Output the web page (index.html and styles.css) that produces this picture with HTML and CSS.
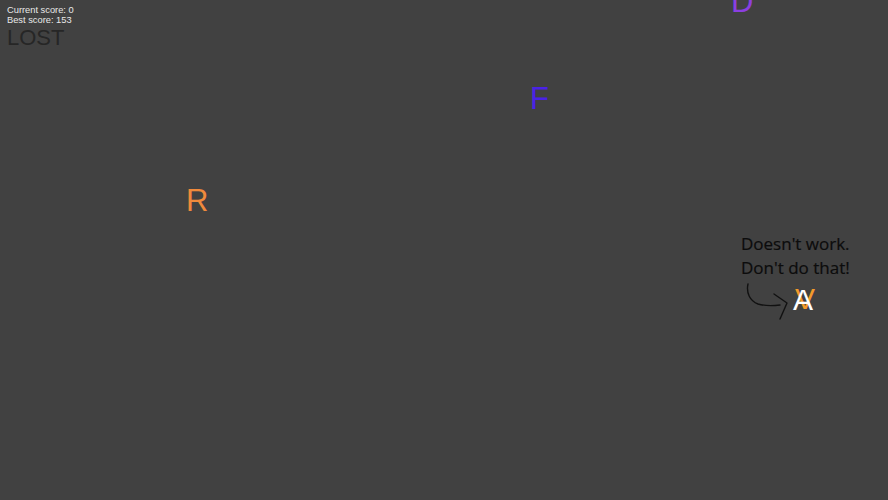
FILE: index.html
```html
<!DOCTYPE html>
<html>
<head>
<meta charset="utf-8">
<link rel="stylesheet" href="styles.css">
</head>
<body>
<div class="game">
  <div class="hud">
    <div class="score">Current score: 0</div>
    <div class="score">Best score: 153</div>
    <div class="status">LOST</div>
  </div>
  <span class="letter l-d">D</span>
  <span class="letter l-f">F</span>
  <span class="letter l-r">R</span>
  <span class="letter l-v">V</span>
  <span class="letter l-a">A</span>
  <div class="note">Doesn't work.<br>Don't do that!</div>
  <svg class="arrow" width="50" height="45" viewBox="0 0 50 45">
    <path d="M8 5 C6 14 10 22 18 25 C25 27 32 27 40 26" fill="none" stroke="#111" stroke-width="1.4" stroke-linecap="round"/>
    <path d="M34 15 L47 24 L40 40" fill="none" stroke="#111" stroke-width="1.4" stroke-linecap="round" stroke-linejoin="round"/>
  </svg>
</div>
</body>
</html>
```
FILE: styles.css
```css
html, body {
  margin: 0;
  padding: 0;
  background: #414141;
  overflow: hidden;
}
.game {
  position: relative;
  width: 888px;
  height: 500px;
  background: #414141;
  font-family: "Liberation Sans", Arial, sans-serif;
}
.hud {
  padding: 5px 0 0 7px;
  display: flex;
  flex-direction: column;
}
.score {
  font-size: 9.3px;
  line-height: 10px;
  color: #e8e8e8;
}
.status {
  font-size: 22px;
  line-height: 22px;
  color: #262626;
  margin-top: 2px;
}
.letter {
  position: absolute;
  font-size: 31px;
  line-height: 1;
}
.l-d { left: 731px; top: -14px; color: #8b3fe0; }
.l-f { left: 530px; top: 83px; color: #4a22e6; }
.l-r { left: 186px; top: 185px; color: #f08a3c; }
.l-v { left: 795px; top: 284px; color: #f39a2a; font-size: 30px; }
.l-a { left: 793px; top: 285px; color: #ffffff; font-size: 30px; }
.note {
  position: absolute;
  left: 741px;
  top: 232px;
  font-family: "Open Sans", "Noto Sans", sans-serif;
  font-size: 17px;
  line-height: 24px;
  color: #0c0c0c;
  -webkit-text-stroke: 0.2px #0c0c0c;
}
.arrow {
  position: absolute;
  left: 740px;
  top: 279px;
}
```
